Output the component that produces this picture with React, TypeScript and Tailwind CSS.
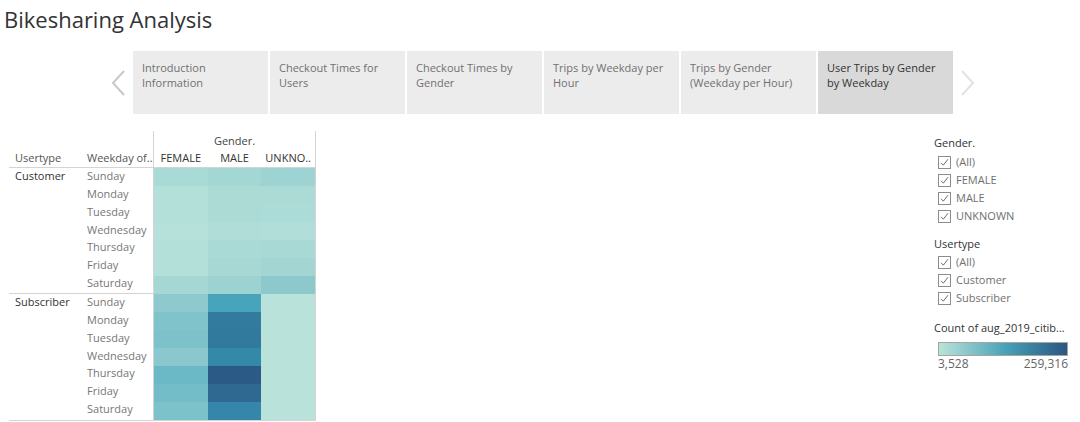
import React from "react";

const tabs = [
  { title: "Introduction Information" },
  { title: "Checkout Times for Users" },
  { title: "Checkout Times by Gender" },
  { title: "Trips by Weekday per Hour" },
  { title: "Trips by Gender (Weekday per Hour)" },
  { title: "User Trips by Gender by Weekday", active: true },
];

const weekdays = [
  "Sunday",
  "Monday",
  "Tuesday",
  "Wednesday",
  "Thursday",
  "Friday",
  "Saturday",
];

// colour of every cell: [FEMALE, MALE, UNKNOWN]
const groups = [
  {
    name: "Customer",
    cells: [
      ["#a9dbd6", "#a3d7d4", "#9dd3d2"],
      ["#b3e0d9", "#acdbd6", "#acdbd6"],
      ["#b3e0d9", "#acdbd6", "#acdcd7"],
      ["#b5e1da", "#b0ddd8", "#b1ded8"],
      ["#b3e0d9", "#a9dad5", "#a9d9d5"],
      ["#b3e0d9", "#a7d8d4", "#a3d6d3"],
      ["#a5d7d4", "#9dd2d1", "#8cc8cc"],
    ],
  },
  {
    name: "Subscriber",
    cells: [
      ["#8ecacd", "#47a4ba", "#b9e3da"],
      ["#80c3cb", "#337b9e", "#b9e3da"],
      ["#7dc2cb", "#327a9d", "#b9e3da"],
      ["#8ac8cd", "#3589a8", "#b8e2da"],
      ["#6bb8c6", "#2c5a87", "#b8e2da"],
      ["#73bdc8", "#2f6890", "#b8e2da"],
      ["#7cc2cb", "#3686ab", "#b8e2da"],
    ],
  },
];

function Checkbox({ label }: { label: string }) {
  return (
    <div className="flex h-[18px] items-center">
      <div className="ml-[4px] flex h-[13px] w-[13px] items-center justify-center border border-[#8c8c8c] bg-white">
        <svg width="11" height="11" viewBox="0 0 11 11">
          <path
            d="M2 5.8 L4.3 8.2 L9 2.2"
            fill="none"
            stroke="#6e6e6e"
            strokeWidth="1"
          />
        </svg>
      </div>
      <span className="ml-[5px] text-[11px] text-[#707070]">{label}</span>
    </div>
  );
}

export default function App() {
  return (
    <div className="h-[422px] w-[1080px] overflow-hidden bg-white font-['Open_Sans',sans-serif] text-[#333]">

      {/* ================= TITLE ================= */}

      <div className="h-[51px] pl-[4px] pt-[5px]">
        <h1 className="text-[22px] leading-[28px] text-[#333]">
          Bikesharing Analysis
        </h1>
      </div>

      {/* ================= TABS ================= */}

      <div className="flex h-[63px] items-stretch">

        <div className="ml-[105px] flex w-[28px] items-center justify-center">
          <svg width="16" height="26" viewBox="0 0 16 26">
            <path
              d="M13 1 L2 13 L13 25"
              fill="none"
              stroke="#c8c8c8"
              strokeWidth="2"
            />
          </svg>
        </div>

        <div className="flex gap-[2px]">
          {tabs.map((tab, index) => (
            <div
              key={index}
              className={`
                w-[135px]
                px-[9px] pt-[9px]
                text-[11px] leading-[15px]
                ${tab.active ? "bg-[#d9d9d9] text-[#333]" : "bg-[#ececec] text-[#707070]"}
              `}
            >
              {tab.title}
            </div>
          ))}
        </div>

        <div className="ml-[6px] flex w-[24px] items-center">
          <svg width="16" height="26" viewBox="0 0 16 26">
            <path
              d="M3 1 L14 13 L3 25"
              fill="none"
              stroke="#e2e2e2"
              strokeWidth="2"
            />
          </svg>
        </div>

      </div>

      {/* ================= MAIN ================= */}

      <div className="flex">

        {/* TABLE */}
        <div className="ml-[9px] mt-[17px] flex border-b border-[#d4d4d4]">

          {/* row headers */}
          <div className="w-[144px]">
            <div className="flex h-[37px] items-end border-b border-[#d4d4d4] pb-[1px] text-[11px]">
              <span className="w-[78px] pl-[6px] text-[#555]">Usertype</span>
              <span className="text-[#555]">Weekday of..</span>
            </div>

            {groups.map((group, gi) => (
              <div
                key={group.name}
                className={`flex ${gi === 0 ? "h-[126px] border-b border-[#d4d4d4]" : "h-[125px]"}`}
              >
                <div className="w-[78px] pl-[6px] text-[11px] leading-[16px] text-[#333]">
                  {group.name}
                </div>
                <div className="flex flex-col">
                  {weekdays.map((day) => (
                    <div
                      key={day}
                      className="h-[18px] text-[11px] leading-[16px] text-[#777]"
                    >
                      {day}
                    </div>
                  ))}
                </div>
              </div>
            ))}
          </div>

          {/* cells */}
          <div className="w-[163px] border-l border-r border-[#d4d4d4]">
            <div className="flex h-[37px] flex-col border-b border-[#d4d4d4] text-[11px]">
              <div className="pt-[2px] text-center leading-[16px] text-[#444]">
                Gender.
              </div>
              <div className="flex leading-[17px] text-[#333]">
                <span className="w-[54px] text-center">FEMALE</span>
                <span className="w-[54px] text-center">MALE</span>
                <span className="w-[54px] text-center">UNKNO..</span>
              </div>
            </div>

            <div className="grid grid-cols-3">
              {groups.map((group) =>
                group.cells.map((row, ri) =>
                  row.map((color, ci) => (
                    <div
                      key={`${group.name}-${ri}-${ci}`}
                      className="h-[18px]"
                      style={{ backgroundColor: color }}
                    />
                  ))
                )
              )}
            </div>
          </div>

        </div>

        {/* FILTERS */}
        <div className="ml-auto w-[146px] pt-[21px]">

          <div className="text-[11px] leading-[16px] text-[#333]">Gender.</div>
          <div className="mt-[2px]">
            <Checkbox label="(All)" />
            <Checkbox label="FEMALE" />
            <Checkbox label="MALE" />
            <Checkbox label="UNKNOWN" />
          </div>

          <div className="mt-[11px] text-[11px] leading-[16px] text-[#333]">
            Usertype
          </div>
          <div className="mt-[1px]">
            <Checkbox label="(All)" />
            <Checkbox label="Customer" />
            <Checkbox label="Subscriber" />
          </div>

          <div className="mt-[13px] whitespace-nowrap text-[11px] leading-[16px] text-[#333]">
            Count of aug_2019_citib...
          </div>
          <div className="ml-[4px] mt-[6px] h-[14px] w-[130px] border border-[#a9a597] bg-linear-to-r from-[#b9e3da] via-[#4aa5ba] to-[#2a5783]" />
          <div className="ml-[4px] flex w-[130px] justify-between text-[12px] leading-[15px] text-[#666]">
            <span>3,528</span>
            <span>259,316</span>
          </div>

        </div>

      </div>

    </div>
  );
}
